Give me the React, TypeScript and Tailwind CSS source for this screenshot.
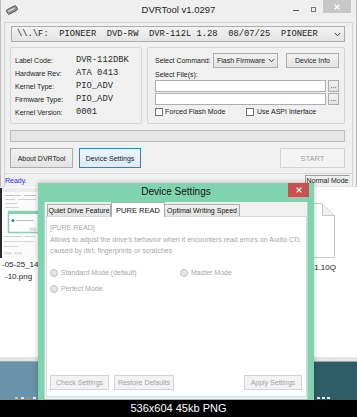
import React from "react";

const mono = "font-['Liberation_Mono','Courier_New',monospace]";
const face = "border border-[#acacac] bg-linear-to-b from-[#f2f2f2] to-[#e3e3e3] flex";
const btn = `${face} items-center justify-center`;
const dbtn =
  "border border-[#d3d3d3] bg-[#f3f3f3] text-[#a3a3a3] flex items-center justify-center";

function DriveIcon() {
  return (
    <svg width="14" height="10" viewBox="0 0 14 10">
      <g transform="rotate(-28 7 5)">
        <rect x="1.5" y="2.5" width="11" height="5" rx="1.6" fill="#8f8f8f" stroke="#4a4a4a" strokeWidth="0.8" />
        <rect x="3" y="3.8" width="7" height="1.3" fill="#dedede" />
      </g>
    </svg>
  );
}

function Chevron() {
  return (
    <svg width="7" height="5" viewBox="0 0 7 5">
      <path d="M0.8 1 L3.5 3.8 L6.2 1" fill="none" stroke="#3a3a3a" strokeWidth="1" />
    </svg>
  );
}

function XIcon({ size = 6 }: { size?: number }) {
  return (
    <svg width={size} height={size} viewBox="0 0 6 6">
      <path d="M0.6 0.6 L5.4 5.4 M5.4 0.6 L0.6 5.4" stroke="white" strokeWidth="1.3" />
    </svg>
  );
}

function Row({ label, value }: { label: string; value: string }) {
  return (
    <div className="h-[13px] flex items-center">
      <div className="w-[61px] text-[#1a1a1a]">{label}</div>
      <div className={`${mono} text-[8.8px] text-[#2a2a2a]`}>{value}</div>
    </div>
  );
}

function DvrWindow() {
  return (
    <div className="h-[187px] flex flex-col bg-[#efefef] border-x border-[#bdbdbd]">
      <div className="h-[22px] shrink-0 flex">
        <div className="w-[64px] pl-[4px] pt-[5px]">
          <DriveIcon />
        </div>
        <div className="flex-1 text-center pt-[4px] text-[9.5px] leading-[12px] text-[#1e1e1e]">
          DVRTool v1.0297
        </div>
        <div className="w-[64px] flex items-start">
          <div className="mt-[10px] ml-[1px] w-[6px] h-[1px] bg-[#555]" />
          <div className="mt-[7px] ml-[12px] w-[5px] h-[5px] border border-[#777]" />
          <div className="ml-[7px] w-[28px] h-[13px] bg-[#c7c7c7] flex items-center justify-center">
            <XIcon />
          </div>
        </div>
      </div>
      <div className="flex-1 mx-[3px] bg-[#f0f0f0] border-x border-t border-[#d2d2d2] flex flex-col">
        <div className="pl-[5px] pr-[7px] flex flex-col">
          <div className={`mt-[3px] ml-[1px] h-[16px] ${face} items-center justify-between pl-[5px] pr-[3px]`}>
            <span className={`${mono} text-[8.8px] whitespace-pre text-[#222]`}>
              {"\\\\.\\F:  PIONEER  DVD-RW  DVR-112L 1.28  08/07/25  PIONEER"}
            </span>
            <Chevron />
          </div>
          <div className="mt-[5px] h-[77px] flex gap-[5px]">
            <div className="w-[132px] border border-[#d6d6d6] rounded-[2px] pt-[6px] pl-[4px]">
              <Row label="Label Code:" value="DVR-112DBK" />
              <Row label="Hardware Rev:" value="ATA 0413" />
              <Row label="Kernel Type:" value="PIO_ADV" />
              <Row label="Firmware Type:" value="PIO_ADV" />
              <Row label="Kernel Version:" value="0001" />
            </div>
            <div className="flex-1 border border-[#d6d6d6] rounded-[2px] pt-[5px] pl-[7px]">
              <div className="h-[15px] flex items-center">
                <div className="w-[58px]">Select Command:</div>
                <div className={`w-[65px] h-[15px] ${face} items-center justify-between pl-[3px] pr-[2px]`}>
                  <span>Flash Firmware</span>
                  <Chevron />
                </div>
                <div className={`ml-[8px] w-[53px] h-[15px] ${btn}`}>Device Info</div>
              </div>
              <div className="h-[12px] flex items-center">Select File(s):</div>
              <div className="flex items-center gap-[2px]">
                <div className="w-[171px] h-[12px] bg-white border border-[#abadb3]" />
                <div className={`w-[11px] h-[12px] ${face} justify-center items-end pb-[2px] text-[7px] leading-[7px]`}>...</div>
              </div>
              <div className="mt-[1px] flex items-center gap-[2px]">
                <div className="w-[171px] h-[12px] bg-white border border-[#abadb3]" />
                <div className={`w-[11px] h-[12px] ${face} justify-center items-end pb-[2px] text-[7px] leading-[7px]`}>...</div>
              </div>
              <div className="h-[13px] flex items-center">
                <div className="w-[8px] h-[8px] border border-[#707070] bg-white" />
                <div className="ml-[2px] w-[81px]">Forced Flash Mode</div>
                <div className="w-[8px] h-[8px] border border-[#707070] bg-white" />
                <div className="ml-[3px]">Use ASPI Interface</div>
              </div>
            </div>
          </div>
          <div className="mt-[6px] h-[12px] border border-[#bcbcbc] bg-[#e6e6e6]" />
          <div className="mt-[6px] h-[20px] flex">
            <div className={`w-[63px] ${btn}`}>About DVRTool</div>
            <div className="ml-[6px] w-[62px] border border-[#3c7fb1] bg-linear-to-b from-[#ecf4fc] to-[#dcecfc] flex items-center justify-center">
              Device Settings
            </div>
            <div className={`ml-auto w-[65px] ${dbtn} text-[7.5px]`}>START</div>
          </div>
        </div>
        <div className="mt-[5px] h-[14px] border-t border-[#d7d7d7] flex items-center">
          <div className="flex-1 text-[#2b2bf0]">Ready.</div>
          <div className="mr-[2px] w-[45px] h-[12px] border-l border-t border-[#a0a0a0] border-r border-b border-r-[#e5e5e5] border-b-[#e5e5e5] flex items-center justify-center text-[#1a1a1a]">
            Normal Mode
          </div>
        </div>
      </div>
    </div>
  );
}

function Thumb() {
  return (
    <svg width="40" height="71" viewBox="0 0 40 71" className="block">
      <rect x="0" y="0" width="40" height="71" fill="#fbfbfb" />
      <rect x="0" y="1" width="2" height="70" fill="#2a2a2a" />
      <rect x="2" y="1" width="38" height="4" fill="#ececec" />
      <rect x="5" y="8" width="16" height="1" fill="#c4c4c4" />
      <rect x="24" y="8" width="12" height="1" fill="#c4c4c4" />
      <rect x="5" y="12" width="10" height="1" fill="#cfcfcf" />
      <rect x="18" y="12" width="18" height="1" fill="#cfcfcf" />
      <rect x="5" y="16" width="12" height="1" fill="#d4d4d4" />
      <rect x="5" y="20" width="14" height="1" fill="#d4d4d4" />
      <rect x="8.5" y="24.5" width="30" height="21" fill="#ffffff" stroke="#86d2ae" strokeWidth="1.5" />
      <rect x="8" y="24" width="31" height="3" fill="#86d2ae" />
      <circle cx="13" cy="33.5" r="1.6" fill="#3d74c4" />
      <rect x="16" y="33" width="18" height="1" fill="#bdbdbd" />
      <rect x="30" y="41" width="6" height="2.5" fill="#e6e6e6" stroke="#c7c7c7" strokeWidth="0.5" />
      <rect x="4" y="49" width="18" height="1" fill="#cfcfcf" />
      <rect x="25" y="49" width="10" height="1" fill="#cfcfcf" />
      <rect x="4" y="54" width="30" height="1" fill="#d8d8d8" />
      <rect x="4" y="59" width="14" height="1" fill="#d8d8d8" />
      <rect x="4" y="65" width="8" height="2.5" fill="#e4e4e4" />
      <rect x="14" y="65" width="8" height="2.5" fill="#e4e4e4" />
    </svg>
  );
}

function PageIcon() {
  return (
    <svg width="46" height="57" viewBox="0 0 46 57" className="block">
      <path d="M1.5 1.5 H32.5 L44.5 13.5 V55.5 H1.5 Z" fill="#ffffff" stroke="#c8c8c8" />
      <path d="M32.5 1.5 V13.5 H44.5" fill="#f1f1f1" stroke="#c8c8c8" />
    </svg>
  );
}

function Desktop() {
  return (
    <div className="h-[213px] flex flex-col">
      <div className="h-[170px] bg-white flex justify-between text-[8px] leading-[10px] text-[#1a1a1a]">
        <div className="w-[40px] flex flex-col">
          <Thumb />
          <div className="mt-[2px] pl-[2px] whitespace-nowrap">-05-25_14-0</div>
          <div className="mt-[2px] pl-[5px] whitespace-nowrap">-10.png</div>
        </div>
        <div className="flex flex-col items-end pr-[21px] pt-[15px]">
          <PageIcon />
          <div className="mt-[4px] whitespace-nowrap">41.10Q</div>
        </div>
      </div>
      <div className="h-[5px] bg-[#e3e3e3] border-b border-[#9aa7ad]" />
      <div className="flex-1 bg-linear-to-r from-[#6a93a9] from-10% to-[#2f5d67] to-90% flex items-end justify-between px-[15px]">
        <div className="flex gap-[3px] mb-[1px]">
          <div className="w-[3px] h-[2px] bg-[#d9c27a]" />
          <div className="w-[3px] h-[2px] bg-[#e0e0e0]" />
          <div className="w-[3px] h-[2px] bg-[#c58a52]" />
          <div className="w-[3px] h-[2px] bg-[#e8e8e8]" />
        </div>
        <div className="flex gap-[2px] mb-[1px] mr-[12px]">
          <div className="w-[3px] h-[2px] bg-[#dfe8ea]" />
          <div className="w-[3px] h-[2px] bg-[#dfe8ea]" />
          <div className="w-[3px] h-[2px] bg-[#dfe8ea]" />
        </div>
      </div>
    </div>
  );
}

function Radio({ label, className = "" }: { label: string; className?: string }) {
  return (
    <div className={`flex items-center ${className}`}>
      <div className="w-[8px] h-[8px] rounded-full border border-[#c2c2c2] bg-[#e4e4e4]" />
      <div className="ml-[3px]">{label}</div>
    </div>
  );
}

function Dialog() {
  return (
    <div className="absolute left-[38px] top-[183px] w-[276px] h-[217px] bg-[#7fd4af] flex flex-col px-[6px] pb-[1px] shadow-[0_0_5px_rgba(0,0,0,0.25)]">
      <div className="-mx-[6px] px-[5px] h-[19px] shrink-0 flex items-start">
        <div className="w-[21px]" />
        <div className="flex-1 text-center pt-[3px] text-[10px] leading-[12px] text-[#111]">Device Settings</div>
        <div className="w-[21px] h-[14px] bg-[#c75050] flex items-center justify-center">
          <XIcon />
        </div>
      </div>
      <div className="flex-1 bg-[#f0f0f0] border-x border-[#b4d9c8] flex flex-col">
        <div className="h-[14px] shrink-0 flex items-end pl-[2px] text-[#111]">
          <div className="w-[64px] h-[12px] border border-b-0 border-[#acacac] bg-linear-to-b from-[#f2f2f2] to-[#e3e3e3] flex items-center justify-center">
            Quiet Drive Feature
          </div>
          <div className="relative z-10 -mb-[1px] w-[54px] h-[15px] border border-b-0 border-[#acacac] bg-white flex items-center justify-center text-[7.5px]">
            PURE READ
          </div>
          <div className="w-[75px] h-[12px] border border-b-0 border-l-0 border-[#acacac] bg-linear-to-b from-[#f2f2f2] to-[#e3e3e3] flex items-center justify-center">
            Optimal Writing Speed
          </div>
        </div>
        <div className="flex-1 ml-[1px] mb-[2px] bg-white border border-[#d9d9d9] flex flex-col pl-[3px] pr-[4px] pt-[5px] pb-[6px] text-[#a6a6a6] leading-[11.5px]">
          <div className="whitespace-nowrap">[PURE READ]</div>
          <div className="whitespace-nowrap">
            Allows to adjust the drive's behavior when it encounters read errors on Audio CD,
            <br />
            caused by dirt, fingerprints or scratches
          </div>
          <div className="mt-[11px] h-[10px] flex items-center">
            <Radio label="Standard Mode (default)" className="w-[130px]" />
            <Radio label="Master Mode" />
          </div>
          <div className="mt-[6px] h-[10px] flex items-center">
            <Radio label="Perfect Mode" />
          </div>
          <div className="mt-auto h-[15px] flex">
            <div className={`w-[59px] ${dbtn}`}>Check Settings</div>
            <div className={`ml-[5px] w-[60px] ${dbtn}`}>Restore Defaults</div>
            <div className={`ml-auto w-[58px] ${dbtn}`}>Apply Settings</div>
          </div>
        </div>
      </div>
    </div>
  );
}

export default function App() {
  return (
    <div className="relative w-[357px] h-[417px] overflow-hidden bg-white font-['Liberation_Sans',Arial,sans-serif] text-[7px] leading-[9px] text-[#1a1a1a]">
      <DvrWindow />
      <Desktop />
      <div className="h-[17px] bg-black text-white text-[11px] leading-[17px] text-center">536x604 45kb PNG</div>
      <Dialog />
    </div>
  );
}
